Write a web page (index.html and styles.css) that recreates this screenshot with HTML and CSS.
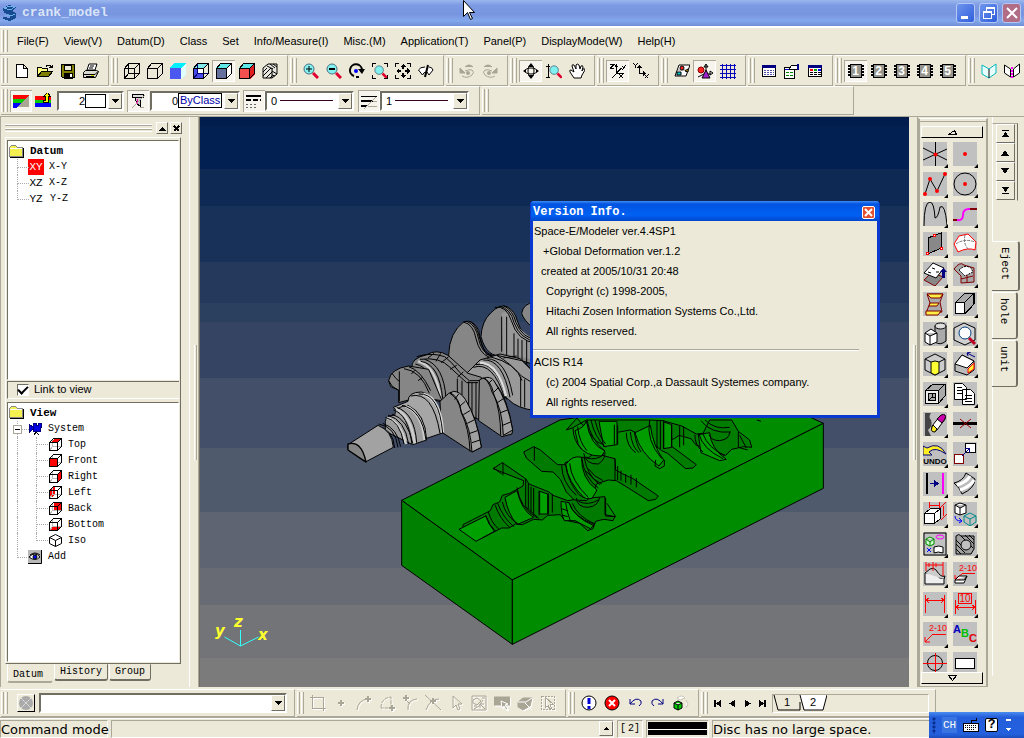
FILE: index.html
```html
<!DOCTYPE html>
<html lang="en">
<head>
<meta charset="utf-8">
<title>crank_model</title>
<link rel="stylesheet" href="styles.css">
</head>
<body>
<svg class="defs" aria-hidden="true">
  <symbol id="cube" viewBox="0 0 16 16"><path d="M.5 5.5h10v10h-10zM.5 5.5l4-5h11v10l-5 5M10.5 5.5l5-5"/></symbol>
  <symbol id="hidden" viewBox="0 0 16 16"><path d="M4.5 .5v10h11M.5 15.5l4-5"/></symbol>
  <symbol id="lens" viewBox="0 0 16 16"><path d="M10 10l5 5" stroke="#e00030" stroke-width="3"/><circle cx="6" cy="6" r="5" fill="#80f0f0" stroke="#507080"/></symbol>
  <symbol id="chip" viewBox="0 0 16 16"><path d="M0 2h16v2H0zM0 5h16v2H0zM0 8h16v2H0zM0 11h16v2H0z" fill="#000" stroke="none"/><path d="M2.500 1.500h11v13h-11z" fill="#96968e" stroke="#000"/></symbol>
  <symbol id="smallcube" viewBox="0 0 13 13"><path d="M3.500 .5v8h9M.5 12.500l3-4" stroke="#bbb"/><path d="M.5 4.500h8v8h-8zM.5 4.500l4-4h8v8l-4 4M8.500 4.500l4-4"/></symbol>
  <symbol id="down" viewBox="0 0 7 4"><path d="M0 0h7L3.500 4z" fill="#000" stroke="none"/></symbol>
  <symbol id="folder" viewBox="0 0 15 13"><path d="M.5 2.500l2-2h4l2 2h5v9H.5z" fill="#f4f050" stroke="#888"/><path d="M1 12.500h13.500V3" stroke="#000"/><path d="M1 3.500h12" stroke="#fff"/></symbol>
</svg>

<header class="titlebar">
  <svg class="i logo" viewBox="0 0 16 16"><path d="M1 3l6-3 8 2-5 4 4 2v5l-6 3-7-2v-2l7 1 1-3-7-2z" fill="#174b91" stroke="none"/><path d="M2 3l6-2 5 1-5 3zM3 10l6 1 4-2" stroke="#6fb0e8"/></svg>
  <h1>crank_model</h1>
  <div class="winbtns">
    <button aria-label="Minimize"><svg class="i" viewBox="0 0 16 16"><path d="M3 12h7" stroke="#fff" stroke-width="3"/></svg></button>
    <button aria-label="Restore"><svg class="i" viewBox="0 0 16 16"><path d="M5.500 5.500v-3h8v7h-3M5 3h9M2.500 6.500h8v7h-8zM2 7h9" stroke="#fff"/></svg></button>
    <button class="close" aria-label="Close"><svg class="i smooth" viewBox="0 0 16 16"><path d="M3 3l10 10M13 3L3 13" stroke="#fff" stroke-width="2"/></svg></button>
  </div>
</header>
<svg class="i smooth pointer" viewBox="0 0 12 21" aria-hidden="true"><path d="M.5 .5v16l4-4 3 7 2-1-3-6h5z" fill="#fff"/></svg>

<nav class="menubar" aria-label="Main menu">
  <span class="grip"></span>
  <button>File(F)</button><button>View(V)</button><button>Datum(D)</button><button>Class</button><button>Set</button><button>Info/Measure(I)</button><button>Misc.(M)</button><button>Application(T)</button><button>Panel(P)</button><button>DisplayMode(W)</button><button>Help(H)</button>
</nav>

<div class="toolbar">
  <div class="group"><span class="grip"></span>
    <button aria-label="New"><svg class="i" viewBox="0 0 16 16"><path d="M2.500 1.500h7l4 4v9h-11zM9.500 1.500v4h4" fill="#fff"/></svg></button>
    <button aria-label="Open"><svg class="i" viewBox="0 0 16 16"><path d="M.5 13.500v-9h4l1 1h5v3" fill="#ffff80"/><path d="M.5 13.500l4-5h11l-4 5z" fill="#808000"/><path d="M9 3.500l1-1h3l2 2M12 4.500h3v-3"/></svg></button>
    <button aria-label="Save"><svg class="i" viewBox="0 0 16 16"><path d="M1.500 1.500h13v13h-12l-1-1z" fill="#808000"/><path d="M4.500 2h7v5h-7z" fill="#ece9d8"/><path d="M4 10h8v5H4z" fill="#000"/><path d="M10 11h2v3h-2z" fill="#fff" stroke="none"/></svg></button>
    <button aria-label="Print"><svg class="i smooth" viewBox="0 0 16 16"><path d="M4 7l2-6h8l-2 6z" fill="#fff"/><path d="M7 3h4M6 5h4"/><path d="M.5 9.500l2-2h11l2 1-3 6H.5z" fill="#d8d8d0"/><path d="M1 11.500h11l3-3M3 13.500h8"/><path d="M8 12.500h3" stroke="#dd0"/></svg></button>
  </div>
  <div class="group"><span class="grip"></span>
    <button aria-label="Wireframe"><svg class="i"><use href="#hidden"/><use href="#cube"/></svg></button>
    <button aria-label="Hidden line"><svg class="i"><use href="#cube"/></svg></button>
    <button aria-label="Shaded"><svg class="i" viewBox="0 0 16 16"><path d="M0 5l4-5h12l-5 5z" fill="#00f0ff" stroke="none"/><path d="M0 5h11v11H0z" fill="#4a58f0" stroke="none"/><path d="M11 5l5-5v11l-5 5z" fill="#e0ffff" stroke="none"/></svg></button>
    <button aria-label="Shaded wire"><svg class="i" viewBox="0 0 16 16"><path d="M0 5h11v11H0z" fill="#4a4aec" stroke="none"/><path d="M0 5l4-5h12l-5 5z" fill="#80e8e8" stroke="none"/><path d="M5 6h6v5H5z" fill="#fff" stroke="none"/><use href="#hidden" stroke="#000070"/><use href="#cube"/></svg></button>
    <button class="on" aria-label="Shaded edges"><svg class="i" viewBox="0 0 16 16"><path d="M0 5h11v11H0z" fill="#66709c" stroke="none"/><path d="M0 5l4-5h12l-5 5z" fill="#60e8e8" stroke="none"/><path d="M11 5l5-5v11l-5 5z" fill="#fff" stroke="none"/><use href="#cube"/></svg></button>
    <button aria-label="Red shaded"><svg class="i" viewBox="0 0 16 16"><path d="M0 5h11v11H0z" fill="#f45050" stroke="none"/><path d="M0 5l4-5h12l-5 5z" fill="#60e8e8" stroke="none"/><path d="M11 5l5-5v11l-5 5z" fill="#e02020" stroke="none"/><use href="#cube"/></svg></button>
    <button aria-label="Hatch"><svg class="i smooth" viewBox="0 0 16 16"><path d="M1 5l5-4h9v10l-5 4H1z" fill="#e8e8e0"/><path d="M1 9l4-4M1 13l8-8M4 15l6-6M8 15l2-2M5 3l6 3M8 1l5 4M11 1l4 3M10 8l5 3M10 12l3 1M10 5v10" stroke-width="1"/></svg></button>
  </div>
  <div class="group"><span class="grip"></span>
    <button aria-label="Zoom in"><svg class="i smooth"><use href="#lens"/><path d="M3 6h6M6 3v6"/></svg></button>
    <button aria-label="Zoom out"><svg class="i smooth"><use href="#lens"/><path d="M3 6h6" stroke-width="2"/></svg></button>
    <button aria-label="Rotate"><svg class="i smooth" viewBox="0 0 16 16"><path d="M5 13a6 6 0 1 1 8-6" stroke-width="2"/><path d="M9 6h7l-3 5z" fill="#000" stroke="none"/><circle cx="7" cy="8" r="2" fill="#00f" stroke="none"/><path d="M7 14h3" stroke-width="2"/></svg></button>
    <button aria-label="Zoom window"><svg class="i" viewBox="0 0 16 16"><path d="M.5 4V.5H4M12 .5h3.500V4M.5 12v3.500H4M12 15.500h3.500V12"/><g class="smooth" transform="translate(2 2) scale(.85)"><use href="#lens" width="16" height="16"/></g></svg></button>
    <button aria-label="Fit"><svg class="i" viewBox="0 0 16 16"><path d="M.5 4V.5H4M12 .5h3.500V4M.5 12v3.500H4M12 15.500h3.500V12"/><path d="M8 1l3 3H5zM8 15l3-3H5zM1 8l3-3v6zM15 8l-3-3v6z" fill="#000" stroke="none"/><path d="M8 4v2M8 10v2M4 8h2M10 8h2" stroke-width="2"/></svg></button>
    <button aria-label="Flip view"><svg class="i smooth" viewBox="0 0 16 16"><path d="M7 4Q2 4 .5 7l4 5q1-3 4-3M11 4q3 0 4 3l-4 5-2-3" fill="#fff"/><path d="M10 2L7 14" stroke-width="2"/></svg></button>
  </div>
  <div class="group"><span class="grip"></span>
    <button aria-label="Previous view" disabled><svg class="i smooth" viewBox="0 0 16 16"><path d="M1 5v5h5zM6 4q4-4 8 0" fill="#aaa696" stroke="#aaa696"/><path d="M3 13q5 3 10-1 3-3 0-5-3-1-7 1" stroke="#aaa696"/><circle cx="9" cy="10" r="2" fill="#aaa696" stroke="none"/></svg></button>
    <button aria-label="Next view" disabled><svg class="i smooth" viewBox="0 0 16 16"><path d="M15 5v5h-5zM10 4Q6 0 2 4" fill="#aaa696" stroke="#aaa696"/><path d="M13 13q-5 3-10-1-3-3 0-5 3-1 7 1" stroke="#aaa696"/><circle cx="7" cy="10" r="2" fill="#aaa696" stroke="none"/></svg></button>
  </div>
  <div class="group"><span class="grip"></span>
    <button class="on" aria-label="Orbit"><svg class="i smooth" viewBox="0 0 16 16"><ellipse cx="8" cy="8" rx="6" ry="3"/><ellipse cx="8" cy="8" rx="3" ry="6"/><path d="M8 0l3 4H5zM8 16l3-4H5zM0 8l3-2v4zM16 8l-3-2v4z" fill="#000" stroke="none"/></svg></button>
    <button aria-label="Zoom drag"><svg class="i smooth" viewBox="0 0 16 16"><path d="M0 3.500h4M2.500 1v13M0 14.500h4"/><g transform="translate(3 2) scale(.85)"><use href="#lens" width="16" height="16"/></g></svg></button>
    <button aria-label="Pan"><svg class="i smooth" viewBox="0 0 16 16"><path d="M5 15L1 9q-1-2 1-2l3 2-2-6q0-2 2-1l2 4V2q1-2 3 0l1 4 1-3q2-1 2 1l-1 4 1-2q2-1 2 1l-3 5-1 3z" fill="#fff"/></svg></button>
  </div>
  <div class="group"><span class="grip"></span>
    <button class="on" aria-label="Axes 3D"><svg class="i" viewBox="0 0 16 16"><path d="M0 1.500h4l-4 4h4M6.500 3v7h7M6.500 10l5-5M5 4l1.500-2L8 4M12 3l2 2M16 2l-4 5M9 11l4 4M13 11l-4 4M2 15l4-4"/></svg></button>
    <button aria-label="Axes 2D"><svg class="i" viewBox="0 0 16 16"><path d="M.5 .5l2 2 2-2M2.500 2v3M6.500 3.500v7h6M4.500 5l2-2 2 2M10 8.500l2 2-2 2M11.500 11.500l4 4M15.500 11.500l-4 4"/></svg></button>
  </div>
  <div class="group"><span class="grip"></span>
    <button aria-label="Datum plane"><svg class="i smooth" viewBox="0 0 16 16"><path d="M5 2h11l-4 11H1z" fill="#fff"/><path d="M4 7h10" stroke="#888"/><circle cx="8" cy="5" r="2" fill="#f22"/><path d="M11 8l3-2v3z" fill="#fd0"/><path d="M3 9h4v3H3z" fill="#0cc"/></svg></button>
    <button class="on" aria-label="Show objects"><svg class="i smooth" viewBox="0 0 16 16"><path d="M9 2v9h5M9 1L7 4h4zM16 10l-3-2v4zM9 10l-8 4"/><circle cx="4" cy="7" r="3" fill="#f22" stroke="#800"/><path d="M9 7l4 8H5z" fill="#a020d0"/></svg></button>
    <button aria-label="Grid"><svg class="i" viewBox="0 0 16 16"><path d="M2.500 1v15M6.500 1v15M10.500 1v15M14.500 1v15M0 2.500h16M0 6.500h16M0 10.500h16M0 14.500h16" stroke="#0808b8"/></svg></button>
  </div>
  <div class="group"><span class="grip"></span>
    <button aria-label="List"><svg class="i" viewBox="0 0 16 16"><path d="M1.500 2.500h13v11h-13z" fill="#fff"/><path d="M1 3.500h14" stroke="#000080" stroke-width="3"/><path d="M3 7.500h10M3 9.500h10M3 11.500h10" stroke="#55a" stroke-dasharray="2 1"/></svg></button>
    <button aria-label="Properties"><svg class="i" viewBox="0 0 16 16"><path d="M.5 4.500h10v11H.5z" fill="#fff"/><path d="M1 6.500h9" stroke="#00c"/><path d="M2 9.500h7M2 12.500h7" stroke="#080" stroke-dasharray="3 1"/><path d="M5 6l3-4h6l1 3-4 2z" fill="#fff"/><path d="M14 1v6" stroke="#008" stroke-width="2"/></svg></button>
    <button aria-label="Table"><svg class="i" viewBox="0 0 16 16"><path d="M1.500 2.500h13v11h-13z" fill="#fff"/><path d="M1 3.500h14" stroke="#000080" stroke-width="3"/><path d="M3 7h3" stroke="red" stroke-width="2"/><path d="M7 7h3" stroke="#00b000" stroke-width="2"/><path d="M11 7h3" stroke="#00f" stroke-width="2"/><path d="M3 9.500h11M3 11.500h11" stroke-dasharray="3 1"/></svg></button>
  </div>
  <div class="group"><span class="grip"></span>
    <button class="on chip"><svg class="i"><use href="#chip"/></svg><b>1</b></button>
    <button class="chip"><svg class="i"><use href="#chip"/></svg><b>2</b></button>
    <button class="chip"><svg class="i"><use href="#chip"/></svg><b>3</b></button>
    <button class="chip"><svg class="i"><use href="#chip"/></svg><b>4</b></button>
    <button class="chip"><svg class="i"><use href="#chip"/></svg><b>5</b></button>
  </div>
  <div class="group last"><span class="grip"></span>
    <button aria-label="Book"><svg class="i smooth" viewBox="0 0 16 16"><path d="M1 2l7 4 7-5v9l-7 5-7-4z" fill="#e8ffff" stroke="#00b8c0"/><path d="M8 6v9"/></svg></button>
    <button aria-label="Section"><svg class="i smooth" viewBox="0 0 16 16"><path d="M.5 2l6 4v8l-6-4zM15.500 1l-6 5v8l6-4z" fill="#fff"/><path d="M8 4v12" stroke="#f0f" stroke-width="2" stroke-dasharray="2 1"/></svg></button>
  </div>
</div>

<div class="toolbar second">
  <div class="group"><span class="grip"></span>
    <button class="on" aria-label="Colour"><svg class="i" viewBox="0 0 16 16"><path d="M0 2h16l-4 4H0z" fill="red" stroke="none"/><path d="M0 6h12l-4 4H0z" fill="#0c0" stroke="none"/><path d="M0 10h8l-5 5H0z" fill="#00f" stroke="none"/><path d="M16 2v12H4z" fill="#aaa696" stroke="none"/></svg></button>
    <button aria-label="Raise class"><svg class="i" viewBox="0 0 16 16"><path d="M0 3h16v4H0z" fill="red" stroke="none"/><path d="M0 7h16v3H0z" fill="#0c0" stroke="none"/><path d="M0 10h16v4H0z" fill="#00f" stroke="none"/><path d="M13.500 9.500h-5v-2h2v-4h-2l4-4 3 4h-2z" fill="#ff0"/></svg></button>
    <div class="combo c1"><select aria-label="Colour number"><option>2</option></select><span class="swatch"></span><span class="arrow"><svg class="i"><use href="#down"/></svg></span></div>
    <button class="on" aria-label="Filter"><svg class="i" viewBox="0 0 16 16"><path d="M2.500 1.500h11v3h-11z" fill="#ddd"/><path d="M5.500 4.500h6l-1 3v6l-4-3z" fill="#ccc"/><path d="M6 9h2M7 6v5" stroke="#f0a"/><path d="M2 15L15 2M10 14h4" stroke="#aaa696"/></svg></button>
    <div class="combo c2"><select aria-label="Class number"><option>0</option></select><span class="byclass">ByClass</span><span class="arrow"><svg class="i"><use href="#down"/></svg></span></div>
    <button class="on" aria-label="Line type"><svg class="i" viewBox="0 0 16 16"><path d="M0 3h15" stroke-width="2"/><path d="M0 7h15" stroke-width="2" stroke-dasharray="5 2"/><path d="M0 11h10M0 14h10" stroke="#666" stroke-dasharray="2 2"/></svg></button>
    <div class="combo line c3"><select aria-label="Line type number"><option>0</option></select><span class="arrow"><svg class="i"><use href="#down"/></svg></span></div>
    <button class="on" aria-label="Line width"><svg class="i" viewBox="0 0 16 16"><path d="M0 3.500h16"/><path d="M0 8h12" stroke-width="2"/><path d="M0 13h6" stroke-width="2"/><path d="M12 8h4M7 13h9M3 16L15 4" stroke="#aaa696"/></svg></button>
    <div class="combo line c3"><select aria-label="Line width number"><option>1</option></select><span class="arrow"><svg class="i"><use href="#down"/></svg></span></div>
  </div>
  <div class="group spare"><span class="grip"></span></div>
</div>

<main class="work">
  <aside class="left">
    <div class="dockhead"><span class="rail"></span><button aria-label="Collapse"><svg class="i" viewBox="0 0 9 9"><path d="M1 7h7L4.500 3z" fill="#000" stroke="none"/></svg></button><button aria-label="Close panel"><svg class="i" viewBox="0 0 9 9"><path d="M2 2l5 5M7 2L2 7" stroke-width="2"/></svg></button></div>
    <div class="sheet">
      <ul class="tree datum">
        <li class="root"><svg class="i fold"><use href="#folder"/></svg>Datum</li>
        <li class="leaf"><span class="code sel">XY</span>X-Y</li>
        <li class="leaf"><span class="code">XZ</span>X-Z</li>
        <li class="leaf end"><span class="code">YZ</span>Y-Z</li>
      </ul>
      <label class="link"><input type="checkbox" checked>Link to view</label>
      <ul class="tree view">
        <li class="root"><svg class="i fold"><use href="#folder"/></svg>View</li>
        <li class="leaf sys"><span class="minus"></span><svg class="i ico" viewBox="0 0 14 14"><path d="M5 1h3v2h2V1h3v4h-1v4H5V7l-4 4V2l4 3z" fill="#0000e0" stroke="#000080"/><path d="M6 13l2-3 3 3"/></svg>System</li>
        <li class="leaf deep"><svg class="i c13" viewBox="0 0 13 13"><use href="#smallcube"/><path d="M2 4.500l3-3.500h7L9 4.500z" fill="red" stroke="none"/><path d="M.5 4.500h8l4-4"/></svg>Top</li>
        <li class="leaf deep"><svg class="i c13" viewBox="0 0 13 13"><use href="#smallcube"/><path d="M.5 4.500h8v8h-8z" fill="red"/></svg>Front</li>
        <li class="leaf deep"><svg class="i c13" viewBox="0 0 13 13"><use href="#smallcube"/><path d="M8.500 4.500l4-4v8l-4 4z" fill="red"/></svg>Right</li>
        <li class="leaf deep"><svg class="i c13" viewBox="0 0 13 13"><path d="M1 4l4-3v8l-4 3z" fill="red" stroke="red"/><use href="#smallcube"/></svg>Left</li>
        <li class="leaf deep"><svg class="i c13" viewBox="0 0 13 13"><path d="M5 1h7v7H5z" fill="red" stroke="none"/><use href="#smallcube"/></svg>Back</li>
        <li class="leaf deep"><svg class="i c13" viewBox="0 0 13 13"><path d="M1 12l3-3h8l-3 3z" fill="red" stroke="red"/><use href="#smallcube"/></svg>Bottom</li>
        <li class="leaf deep lastdeep"><svg class="i smooth c13" viewBox="0 0 13 13"><path d="M6.500 .5l6 3v6l-6 3-6-3v-6zM.5 3.500l6 3 6-3M6.500 6.500v6"/></svg>Iso</li>
        <li class="leaf end"><svg class="i smooth ico" viewBox="0 0 14 14"><path d="M0 0h14v14H0z" fill="#b8b8b8" stroke="none"/><path d="M0 13.500h13.500V0"/><path d="M1 7q6-6 11 0-5 5-11 0z" fill="#fff"/><path d="M2 5q5-4 10 0"/><circle cx="7" cy="7" r="2" fill="#00f"/></svg>Add</li>
      </ul>
    </div>
    <div class="tabs" role="tablist"><button class="cur" role="tab">Datum</button><button role="tab">History</button><button role="tab">Group</button></div>
  </aside>
  <div class="split"></div>

  <section class="viewport">
    <svg class="scene" viewBox="199 117 711 570" preserveAspectRatio="xMidYMid slice" role="img" aria-label="Crank model">
      <g shape-rendering="crispEdges">
        <rect x="199" y="117" width="711" height="10" fill="#001d4e"/><rect x="199" y="126" width="711" height="43" fill="#022152"/>
        <rect x="199" y="169" width="711" height="37" fill="#0e2953"/><rect x="199" y="206" width="711" height="56" fill="#183158"/>
        <rect x="199" y="262" width="711" height="41" fill="#24395c"/><rect x="199" y="303" width="711" height="19" fill="#2b3f5e"/>
        <rect x="199" y="322" width="711" height="56" fill="#354463"/><rect x="199" y="378" width="711" height="70" fill="#434f68"/>
        <rect x="199" y="448" width="711" height="64" fill="#505a6d"/><rect x="199" y="512" width="711" height="56" fill="#5e6472"/>
        <rect x="199" y="568" width="711" height="37" fill="#686b74"/><rect x="199" y="605" width="711" height="53" fill="#727478"/>
        <rect x="199" y="658" width="711" height="29" fill="#7b7b7b"/>
      </g>
      <g transform="translate(395 410) scale(.33333)" fill="none" stroke="#000" stroke-width="3" stroke-linejoin="round">
        <path d="M20 271L495 30 700 0h500l85 40L352 510z" fill="#008c00"/>
        <path d="M20 271l332 239v193L20 466z" fill="#008000"/>
        <path d="M352 510L1285 40v195L352 703z" fill="#008c00"/>

        <path d="M294 176l28-18 70 48 10 16 60 24 12 10 44 16 40-6 72-6v54l30 6-6 12-28-4-24 6-8 22-16 6-24-22-46-10-12-16-38 2-16 14-26-2-34 16-20-2-20 12-22 0-62 32-8 0-46-36 0-6 82-42 8-18 20-8 8-20 22-6 40-22 2-16z" fill="#007a00"/>
        <path d="M192 358l80-40q8 24 26 46l-55 30z" fill="#00a000"/>
        <path d="M330 262l36-20q14 60 50 80l-50 22q-28-34-36-82z" fill="#009800"/>
        <path d="M280 306q10 34 32 52M272 316q10 30 30 48M300 284q14 42 44 68M308 280q16 42 48 70M322 276q10 44 48 66M366 232q8 60 60 92"/>
        <path d="M392 206v84l40 36M400 220v76M408 230v78M416 234v80M432 242v74M460 250v64M472 252v56"/>
        <path d="M434 244l24 8v60h-24z" fill="#00a000"/>
        <path d="M324 158v38M296 174l24 18"/>
        <path d="M498 274l24 4q10 40 76 66l-12 12-46-24-32 0q-10-20-10-58z" fill="#009c00"/>
        <path d="M512 278q4 30 14 54M522 278q16 44 72 68M500 296l18 6M504 316l14 4M532 280q16 40 68 62"/>

        <path d="M386 126l30-16 20 10 52 44 22 0 0-6 48-16 24 0 24-18 22 14 32 8 2 34 22 12 30 14 76 52-8 10-22 4-60-38-36-22-24-2-36 12-10 34-20 16-36-2-24-24-18-38-22-22-34-2-46-40z" fill="#007a00"/>
        <path d="M512 164q20-30 48-22-2 64 46 98l-14 24q-16 8-40-10-34-40-40-90z" fill="#009c00"/>
        <path d="M500 166q0 50 44 90M512 162q6 54 56 102M524 160q4 52 56 102M560 144q8 60 50 90M568 144q8 50 46 80M544 264q2 28 36 28 30-4 34-30M550 274q30 14 60-4M418 110v42"/>
        <path d="M660 146v64M668 168v42M678 182v30M692 192v26M708 194v30M724 204v28M574 184q20 26 46 38M580 176q16 24 44 36"/>

        <path d="M514 60l18-6 42-24h190l40 2 56 16 44 24 20-2 20-40h66l20 34 34 26 6 22-24-2-36 8-18 18-66-24-22-6-16-20-36-10-14 10-28 8 94 70-10 10-22 2-54-46-18-8-48-40-46-22-44 8-6 30q-24 14-52-4l-28-34-30-36z" fill="#007c00"/>
        <path d="M540 62q30-10 34-30 12 76 56 90l-10 16q-50 2-70-34zM612 34h54v70l-40 6zM720 68l46-22q8 62 40 104l-14 18q-56-36-72-100zM910 74l34-6q4 48 50 80l-20 4-56-24zM806 36l24 8v68l-24 4z" fill="#009c00"/>
        <path d="M576 30q10 58 54 94M588 30q10 50 44 82M600 30q12 50 32 72M566 130q6 34 44 32 22-14 20-36M574 144q30 8 52-10M534 54q0 36 26 64M548 50q4 46 28 72"/>
        <path d="M694 68q0 40 28 60M706 66q4 44 26 62M718 66q6 40 20 60M764 30q-12 60 36 116M786 30v84M796 30v88M806 30v86M830 44v68M854 48v64M866 50v56M782 150l-2 18 14 8 14-8v-18M668 46v58M658 44v60M900 74q-2 30 24 52M912 72q10 44 72 74M924 72q14 40 66 66"/>
        <path d="M918 32q30 40 90 34M930 30q30 30 74 22M942 74q6 18 32 18 30-4 30-26M1030 66v46l28 8M1034 76l20 38M632 264v54l30 2-26-40M1086 30l12 4"/>
      </g>
      <g transform="translate(340 290) scale(.33333)" fill="#868686" stroke="#000" stroke-width="3" stroke-linejoin="round">
        <path d="M585 36q-35 4-40 34 5 20 40 50z"/>
        <path d="M423 140q2-46 30-72 26-26 48-18 24 14 30 40 16 54 60 66v70l-100-30q-50 10-68-56z"/>
        <path d="M485 70q15-10 30 4 10 40 70 76v60l-95-20z" fill="#989898" stroke="none"/>
        <path d="M485 80v105M500 80v115M522 130v70M534 146v66M546 150v76M560 150v80"/>
        <path d="M464 52q36-6 50 40 18 62 76 68M478 48q34 8 44 50 18 50 70 58M490 46q30 16 38 52 20 48 62 50" fill="none"/>
        <path d="M326 195q2-68 46-100 28-8 44 26 8 50 24 72l40 10-70 60-70-22z"/>
        <path d="M370 96q30 6 38 50 10 44 40 56M380 94q28 10 36 54 8 38 36 50M390 94q22 14 30 54 8 38 36 48" fill="none"/>
        <path d="M380 250l40-40 60-18 60 14 50 46v110q-60-6-85-34z" fill="#999"/>
        <path d="M400 232q60-20 95 96M408 224q60-14 92 104M430 210q58-4 80 112M440 206q58 0 78 110M450 200q80 20 96 72" fill="none"/>
        <path d="M420 218q54 2 78 100" fill="none" stroke="#ddd" stroke-width="7"/>
        <path d="M470 196l76 16 44 44v30l-46-28q-32-38-74-62z" fill="#999"/><path d="M542 260v90M554 268v84M490 204l40-6"/>
        <path d="M216 232q-4-26 44-38 30-18 64 2l60 54 40 12v130l-100-48-50-18z" fill="#868686"/>
        <path d="M230 200q44-14 84 0 20 14 44 46l30 26 34 0M240 208q60-8 90 24l50 46h34M282 190l-18 14M302 190l-14 24M326 200l-22 18M350 226l-20 12M370 246l-18 16" fill="none"/>
        <path d="M234 214q54 12 68 114" fill="none" stroke="#d0d0d0" stroke-width="7"/>
        <path d="M242 214q56 8 66 112M254 208q58 18 64 118M226 222q54 12 68 106" fill="none"/>
        <path d="M352 266v50M366 272v44M386 274v82M396 276v98M408 276v112"/>
        <path d="M418 270q22-16 44 4 42 50 56 146l-2 12-30 8-70-48z"/>
        <path d="M440 262q18 0 24 14 40 60 54 144l-28 16q-2-80-34-130-8-30-22-40z" fill="#a0a0a0"/>
        <path d="M428 264q24 4 34 50 20 50 20 122M456 270l-12 12M476 292l-14 14M490 326l-18 12M502 360l-20 8M512 396l-24 10" fill="none"/>
        <path d="M146 272q6-36 60-44l60 10 40 94-70-10-60 16v-38l-24-10z"/>
        <path d="M178 244v90M206 230q36 10 66 72M192 236q50 6 76 74M146 272q8 20 28 28M156 250q14 20 22 24M226 240l-12 12M248 262l-14 10" fill="none"/>
        <path d="M300 334l26-24q26-14 46 14 40 56 52 148l-28 14-92-60z"/>
        <path d="M340 304q20 0 36 24 36 60 48 144l-28 14q-4-74-32-120-8-40-34-56z" fill="#a0a0a0"/>
        <path d="M330 308q28 12 34 60 24 50 26 116M356 312l-12 16M376 334l-16 14M390 362l-20 12M402 390l-20 10M412 422l-22 8M420 450l-24 8" fill="none"/>
        <path d="M204 334q0-28 40-28 52 8 66 122l-70 24q-40-60-80-100z" fill="#a6a6a6"/>
        <path d="M250 312q52 14 58 116" fill="none" stroke="#d8d8d8" stroke-width="9"/>
        <path d="M212 318q66-16 88 112M236 312q62-4 72 118" fill="none"/>
        <path d="M136 394q4-20 28-18 0-26 40-30 52 24 56 104l-42 14-82-40z" fill="#9d9d9d"/>
        <path d="M168 358q46 20 56 102M196 348q50 20 58 102M140 384q40 8 58 78" fill="none" stroke="#ccc" stroke-width="8"/>
        <path d="M160 360q44 12 56 102M170 352q54 18 60 106M186 346q60 14 72 104M136 382q44 10 56 80M144 376q50 12 62 86M156 372q48 16 62 88M110 408q50 8 54 66M116 402q50 8 58 70M128 400q44 14 54 70" fill="none"/>
        <path d="M24 464l90-58q42 16 46 66l-84 44q-30-20-52-36z" fill="#a2a2a2"/>
        <path d="M24 480v-18q40-12 54 54z" fill="#858585" stroke-width="4"/>
      </g>
      <path d="M240.500 630v16l-16-9M240.500 646l18-9" fill="none" stroke="#3ff"/>
      <g class="axis"><text x="215" y="636">y</text><text x="234" y="627">z</text><text x="258" y="640">x</text></g>
    </svg>

    <div class="dialog" role="dialog" aria-labelledby="dlg">
      <div class="dhead"><h2 id="dlg">Version Info.</h2><button aria-label="Close dialog"><svg class="i smooth" viewBox="0 0 11 11"><path d="M2 2l7 7M9 2L2 9" stroke="#fff" stroke-width="2"/></svg></button></div>
      <div class="dbody">
        <p>Space-E/Modeler ver.4.4SP1</p><p class="in2">+Global Deformation ver.1.2</p><p class="in1">created at 2005/10/31 20:48</p><p class="in3">Copyright (c) 1998-2005,</p><p class="in3">Hitachi Zosen Information Systems Co.,Ltd.</p><p class="in3">All rights reserved.</p>
        <hr>
        <p>ACIS R14</p><p class="in3">(c) 2004 Spatial Corp.,a Dassault Systemes company.</p><p class="in3">All rights reserved.</p>
      </div>
    </div>
  </section>
  <div class="split right"></div>

  <aside class="palette">
    <button class="scroll" aria-label="Scroll up"><svg class="i" viewBox="0 0 9 6"><path d="M.5 5.500h8l-2-4z"/></svg></button>
    <div class="cells">
      <button aria-label="Point on axes"><svg class="i smooth"><path d="M12.500 0v24M0 6l24 12M0 18L24 7"/><circle cx="12.500" cy="12.500" r="2" fill="red" stroke="none"/></svg></button>
      <button aria-label="Point"><svg class="i smooth"><circle cx="12" cy="12" r="2" fill="red" stroke="none"/></svg></button>
      <button aria-label="Polyline"><svg class="i smooth"><path d="M2 22L7 7l7 12 8-17"/><g fill="red" stroke="none"><circle cx="2" cy="22" r="2"/><circle cx="7" cy="7" r="2"/><circle cx="14" cy="19" r="2"/><circle cx="22" cy="2" r="2"/></g></svg></button>
      <button aria-label="Circle"><svg class="i smooth"><circle cx="12" cy="12" r="11"/><circle cx="12" cy="12" r="2" fill="red" stroke="none"/></svg></button>
      <button aria-label="Spline"><svg class="i smooth"><path d="M1 24Q1 0 7 0q4 0 5 16 3 0 5-11 5-4 7 18"/></svg></button>
      <button aria-label="Connect curve"><svg class="i smooth"><path d="M0 18h5M16 7h8" stroke="#800000" stroke-width="2"/><path d="M4 18q6 1 6-5t6-6h1" stroke="#f0f" stroke-width="2"/></svg></button>
      <button aria-label="Plane"><svg class="i"><path d="M5 6l13-5v15L5 22z" fill="#888"/><path d="M10.500 2.500h2v2h-2zM17.500 15.500h2v2h-2zM3.500 20.500h2v2h-2z" fill="#fff" stroke="red"/></svg></button>
      <button aria-label="Surface"><svg class="i smooth"><path d="M6 4l9-2 8 8-1 8q-7-3-17 2L1 12z" fill="#fff" stroke="red"/><path d="M3 12q8-6 19-2M12 3q-2 8 3 14" stroke="#777" stroke-dasharray="3 1"/></svg></button>
      <button aria-label="Offset surface"><svg class="i smooth"><path d="M1 18l8-8 11 5-8 9z" fill="#888" stroke="#800000"/><path d="M1 11L10 1l11 5-8 10z" fill="#fff"/><path d="M5 10l3 1M9 6l3 1M13 10h3"/><path d="M20.500 16V9" stroke="#000080" stroke-width="3"/><path d="M17 10h7l-3.500-4z" fill="#000080" stroke="none"/></svg></button>
      <button aria-label="Patch surface"><svg class="i smooth"><path d="M1 7Q7-1 11 3l10 3v14L8 21V14z" fill="#a8a8a8" stroke="#800000"/><path d="M6 8q6-6 12-2l2 4-8 4z" fill="#fff" stroke-dasharray="2 1"/><path d="M8 17l12-3M14 13v8" stroke="#800000"/></svg></button>
      <button aria-label="Loft"><svg class="i smooth"><path d="M4 2h16l-3 8 2 10-12 1H3l4-10z" fill="#aaa" stroke="#800000"/><path d="M4 2h16l-3 4H8zM7 11h9l-2 3H6zM3 19h15l-3 4H3z" fill="#fe4" stroke="#800000"/></svg></button>
      <button aria-label="Block"><svg class="i"><path d="M2 11L12 1h9v11l-9 10z" fill="#aaa"/><path d="M2.500 10.500h9v11h-9z" fill="#fff"/><path d="M11.500 10.500l9-9v11l-9 9M2.500 10.500l9-9h9"/></svg></button>
      <button aria-label="Cylinder and box"><svg class="i smooth"><path d="M12 4v16q5 4 11-1V4" fill="#aaa"/><ellipse cx="17.500" cy="4" rx="5.500" ry="3" fill="#ddd"/><path d="M2 11l6-4 6 4v9l-7 3-5-3zM2 11l5 3 7-3M7 14v9" fill="#fff"/></svg></button>
      <button aria-label="Inspect solid"><svg class="i smooth"><path d="M1 6l10-5 11 5v12l-10 5-11-5z" fill="#d0d0d0"/><circle cx="12" cy="11" r="6" fill="#fff" stroke="#004080"/><path d="M16 16l6 6" stroke="#c00020" stroke-width="3"/></svg></button>
      <button aria-label="Shell"><svg class="i smooth"><path d="M2 7l10-5 10 5v11l-10 5-10-5z" fill="#ccc"/><path d="M8 10q4-2 8 0v11l-4 2-4-2z" fill="#ff3"/><path d="M2 7l6 3M22 7l-6 3"/></svg></button>
      <button aria-label="Draft"><svg class="i smooth"><path d="M2 12L9 3l12 6v9l-7 5-12-4z" fill="#bbb"/><path d="M2 12L9 3l12 6-7 7z" fill="#fff"/><path d="M15 17l6-6v6l-6 4z" fill="#fe3" stroke="red"/><path d="M14 1l8 4M15 4l-1-3 4-1" stroke="#000080"/></svg></button>
      <button aria-label="Hollow"><svg class="i"><path d="M2 9l8-7h12v12l-6 7" fill="#aaa"/><path d="M2.500 8.500h13v13h-13z" fill="#eee"/><path d="M5.500 11.500h7v7h-7z" fill="#aaa"/><path d="M15.500 8.500l6-6M6 18l3-3h3M9 12v3"/></svg></button>
      <button aria-label="Copy"><svg class="i smooth"><path d="M1.500 1.500h8l4 4v12h-12zM9.500 7.500h8l4 4v11h-12z" fill="#fff"/><path d="M4 5.500h5M4 8.500h5M4 11.500h5M12 13.500h7M12 16.500h7M12 19.500h7"/></svg></button>
      <button aria-label="Erase"><svg class="i smooth"><path d="M2 1h6q-3 4 0 7 2 6-3 10l3 6H2z" fill="#444" stroke="none"/><path d="M9 14l8-10q5-1 5 3l-8 11q-5 2-5-4z" fill="#fff"/><path d="M14 7l4-4q6-2 4 4l-3 4z" fill="#c0a"/><path d="M10 13l4 4-2 3q-5 0-3-5z" fill="#fe2"/></svg></button>
      <button aria-label="Break"><svg class="i smooth"><path d="M0 11.500h24" stroke-width="3"/><path d="M7 7l11 9M18 7L7 16" stroke="#a00000"/></svg></button>
      <button class="undo"><svg class="i smooth"><path d="M0 4v9h9l-3-3q6-6 17 2Q16-1 4 6z" fill="#fe2" stroke="#000080"/></svg><span>UNDO</span></button>
      <button aria-label="Move"><svg class="i"><path d="M12.500 1.500h10v9h-10z" fill="#fff"/><path d="M1.500 12.500h9v9h-9z" fill="#fff" stroke="#800000"/><path d="M9 14l7-7M12 6.500h4v4" stroke="#000080"/></svg></button>
      <button aria-label="Translate"><svg class="i"><path d="M4 1v21" stroke-width="2"/><path d="M20 1v21" stroke="#f0f" stroke-width="2"/><path d="M7 11.500h8" stroke="#000080"/><path d="M11 8l5 3.500-5 3.500z" fill="#000080" stroke="none"/></svg></button>
      <button aria-label="Bend"><svg class="i smooth"><path d="M1 11Q10 9 13 1l9 6q0 9-13 15-2-6-8-11z" fill="#bbb"/><path d="M4 13Q14 10 17 4M7 18q11-4 14-10" stroke="#fff" stroke-width="3"/></svg></button>
      <button aria-label="Dimension solid"><svg class="i"><path d="M1.500 11.500h10v10h-10zM1.500 11.500l6-5h10v10l-6 5M11.500 11.500l6-5" fill="#fff"/><path d="M6.500 0v6M16.500 0v6M6 3.500h10M17 6l6-6M20.500 4v10M18 18l6-6" stroke="red"/></svg></button>
      <button aria-label="Convert"><svg class="i smooth"><path d="M2 3l5-2 6 2v8l-6 2-5-2zM2 3l5 3 6-3M7 6v7" fill="#fff"/><path d="M11 14l6-3 6 3v6l-6 4-6-4zM11 14l6 3 6-3M17 17v6" stroke="#088"/><path d="M2 14q0 5 6 5M6 16l3 3-3 2" stroke="#00f"/></svg></button>
      <button aria-label="Part library"><svg class="i smooth"><path d="M1 1h22v22H1z"/><path d="M3 7l4-2 4 2v5l-4 2-4-2zM3 7l4 3 4-3M7 10v4" fill="#cfc" stroke="#080"/><ellipse cx="17" cy="5" rx="4" ry="2" stroke="#f0f"/><path d="M4 16l4 4M8 16l-4 4" stroke="#00f"/><path d="M11 15q5-2 9 0v6q-5-2-9 0z" fill="#fff"/></svg></button>
      <button aria-label="Hatch region"><svg class="i smooth"><path d="M3 4q3-3 5 0h13v13l-3 5H3z" fill="#a0a0a0"/><path d="M12 3l9 9M16 3l5 5M3 8l10 10M3 12l9 9M3 17l5 5M8 4l12 12"/><circle cx="13" cy="13" r="5" fill="#c0c0c0"/></svg></button>
      <button aria-label="Curve measure"><svg class="i smooth"><path d="M2 11h6q2-4 5 0 3 7 8 5v6H2z" fill="#eee"/><path d="M2 11l5-4q4-2 6 1 5 8 9 6l-1 3" fill="#ccc"/><path d="M3 0v9M10 0v9M20 0v14M3 3h17M6 1v4M13 1v4" stroke="red"/></svg></button>
      <button class="txt t210" aria-label="Note 2-10"><svg class="i smooth"><path d="M9 11.500h13M9 12l-7 5M2 13v4h5" stroke="red"/><path d="M2 18l4-4h8l-3 7H2zM2 18h9l3-4" fill="#fff"/></svg><span>2-10</span></button>
      <button aria-label="Distance"><svg class="i"><path d="M2.500 3v18M21.500 3v18M3 8.500h18M6 6l-3 2 3 3M18 6l3 2-3 3" stroke="red"/></svg></button>
      <button class="txt t10" aria-label="Dimension 10"><svg class="i"><path d="M5.500 1.500h13v10h-13zM2.500 8v14M22.500 8v14M3 15.500h19M6 13l-3 2 3 3M19 13l3 2-3 3" stroke="red"/></svg><span>10</span></button>
      <button class="txt t210" aria-label="Leader 2-10"><svg class="i smooth"><path d="M9 12.500h14M9 13l-7 7M2 15v5h5" stroke="red"/></svg><span>2-10</span></button>
      <button class="abc"><span>A</span><span>B</span><span>C</span></button>
      <button aria-label="Centre mark"><svg class="i smooth"><circle cx="12" cy="11" r="7.500"/><path d="M0 11.500h24M12.500 1v20" stroke="red"/></svg></button>
      <button aria-label="Rectangle"><svg class="i"><path d="M2.500 6.500h19v10h-19z" fill="#fff"/></svg></button>
    </div>
    <button class="scroll" aria-label="Scroll down"><svg class="i" viewBox="0 0 9 6"><path d="M.5 .5h8l-4 5z"/></svg></button>
  </aside>

  <aside class="side">
    <div class="navs">
      <button aria-label="First"><svg class="i" viewBox="0 0 9 9"><path d="M1 1h7v1H1zM1 8h7L4.500 3z" fill="#000" stroke="none"/></svg></button>
      <button aria-label="Up"><svg class="i" viewBox="0 0 9 9"><path d="M0 8h8L4 2z" fill="#000" stroke="none"/></svg></button>
      <button aria-label="Down"><svg class="i" viewBox="0 0 9 9"><path d="M0 1h8L4 7z" fill="#000" stroke="none"/></svg></button>
      <button aria-label="Last"><svg class="i" viewBox="0 0 9 9"><path d="M1 1h7L4.500 6zM1 7h7v1H1z" fill="#000" stroke="none"/></svg></button>
    </div>
    <div class="vtabs" role="tablist"><button class="cur" role="tab">Eject</button><button role="tab">hole</button><button role="tab">unit</button></div>
  </aside>
</main>

<div class="toolbar bottom">
  <div class="group command"><span class="grip"></span>
    <button class="stop" aria-label="Cancel command" disabled><svg class="i smooth" viewBox="0 0 16 16"><circle cx="8" cy="8" r="7" fill="#aaa" stroke="none"/><path d="M3 3l10 10M13 3L3 13" stroke="#eee" stroke-dasharray="2 1"/></svg></button>
    <div class="combo wide"><select aria-label="Command"><option></option></select><span class="arrow"><svg class="i"><use href="#down"/></svg></span></div>
  </div>
  <div class="group dim"><span class="grip"></span>
    <button disabled aria-label="Box snap"><svg class="i"><path d="M2.500 2.500h11v11h-11zM0 2.500h3M2.500 0v3M12 13.500h4M13.500 11v5"/></svg></button>
    <button disabled aria-label="Point snap"><svg class="i"><path d="M5 8h6M8 5v6" stroke-width="2"/></svg></button>
    <button disabled aria-label="End snap"><svg class="i smooth"><path d="M1 15Q2 5 12 4"/><path d="M9 4h6M12 1v6" stroke-width="2"/></svg></button>
    <button disabled aria-label="Arc snap"><svg class="i smooth"><path d="M2 13Q2 3 12 2v11z" stroke-dasharray="4 1"/><path d="M10 13h6M13 10v6" stroke-width="2"/></svg></button>
    <button disabled aria-label="Tangent snap"><svg class="i smooth"><path d="M6 15Q5 5 15 4M4 5l4 4"/><path d="M1 3h6M4 0v6" stroke-width="2"/></svg></button>
    <button disabled aria-label="Intersection snap"><svg class="i smooth"><path d="M0 0l16 15M1 15Q5 4 14 4"/><path d="M5 6h6M8 3v6" stroke-width="2"/></svg></button>
    <button disabled aria-label="Pick"><svg class="i smooth"><path d="M5 1v12l3-3 2 5 2-1-2-5h4z"/></svg></button>
    <button disabled aria-label="Pick region"><svg class="i smooth"><path d="M1 1h14v14H1zM2 5l4-2 4 3-4 4-4-2zM3 14l5-3 4-6M9 9l5 5M9 13V9h4M11 3h3M3 11h3"/></svg></button>
    <button disabled aria-label="Pick face"><svg class="i smooth"><path d="M0 2h16v8H0z" fill="#aaa696"/><path d="M7 6l7 3-3 1 3 4-2 1-2-4-2 2z" fill="#aaa696" stroke="#fff"/></svg></button>
    <button disabled aria-label="Pick body"><svg class="i smooth"><path d="M1 7l5-4h9l-2 8-7 4-5-3z" fill="#aaa696"/><path d="M1 7h8l6-4M8 8l6 6" stroke="#fff"/></svg></button>
    <button disabled aria-label="Pick window"><svg class="i"><path d="M1.500 1.500h13v13h-13z" stroke-dasharray="2 1"/><path d="M5.500 2.500v10l3-2 1 4 2-1-1-4h3z"/></svg></button>
  </div>
  <div class="group"><span class="grip"></span>
    <button aria-label="Information"><svg class="i smooth" viewBox="0 0 16 16"><circle cx="8" cy="8" r="7" fill="#fff"/><path d="M8 3v6M8 11v3" stroke="#00d" stroke-width="3"/></svg></button>
    <button aria-label="Stop"><svg class="i smooth" viewBox="0 0 16 16"><circle cx="8" cy="8" r="7" fill="red"/><path d="M5 5l6 6M11 5l-6 6" stroke="#fff" stroke-width="2"/></svg></button>
    <button aria-label="Undo"><svg class="i smooth" viewBox="0 0 16 16"><path d="M3 4v5h5M3 9q6-8 11-3 1 3-2 5" stroke="#000080"/></svg></button>
    <button aria-label="Redo"><svg class="i smooth" viewBox="0 0 16 16"><path d="M13 4v5H8M13 9Q7 1 2 6q-1 3 2 5" stroke="#000080"/></svg></button>
    <button aria-label="View solid"><svg class="i smooth" viewBox="0 0 16 16"><path d="M4 3q5-4 8 0l-5 2zM13 5l2 4-2 4" stroke="#c8c4b4" fill="#fff"/><path d="M1 8l4-2 4 2v5l-4 2-4-2zM1 8l4 2 4-2M5 10v5" fill="#0c0"/></svg></button>
  </div>
  <div class="group pages"><span class="grip"></span>
    <button aria-label="First page"><svg class="i" viewBox="0 0 9 9"><path d="M1 1h2v7H1zM8 1v7L3 4.500z" fill="#000" stroke="none"/></svg></button>
    <button aria-label="Previous page"><svg class="i" viewBox="0 0 9 9"><path d="M7 1v7L1 4.500z" fill="#000" stroke="none"/></svg></button>
    <button aria-label="Next page"><svg class="i" viewBox="0 0 9 9"><path d="M2 1v7l6-3.500z" fill="#000" stroke="none"/></svg></button>
    <button aria-label="Last page"><svg class="i" viewBox="0 0 9 9"><path d="M6 1h2v7H6zM1 1v7l5-3.500z" fill="#000" stroke="none"/></svg></button>
    <div class="sheets"><button><svg class="i smooth" viewBox="0 0 28 16"><path d="M1 0l4 15h22V7"/></svg><span>1</span></button><button><svg class="i smooth" viewBox="0 0 28 16"><path d="M1 0l4 15h19l4-15z" fill="#fff" stroke="none"/><path d="M1 0l4 15h19l4-15"/></svg><span>2</span></button></div>
  </div>
</div>

<footer class="status">
  <output class="mode">Command mode</output>
  <div class="prompt"><button aria-label="History"><svg class="i" viewBox="0 0 9 9"><path d="M1 6h7L4.500 3z" fill="#000" stroke="none"/></svg></button></div>
  <output class="count"><span>[</span><span>2]</span></output>
  <div class="meter"></div>
  <output class="disc">Disc has no large space.</output>
</footer>

<div class="ime">
  <span class="dots"></span><button>CH</button>
  <button aria-label="Keyboard"><svg class="i" viewBox="0 0 16 16"><path d="M.5 6.500h15v8H.5z" fill="#fff"/><path d="M2 8.500h12M2 10.500h12M4 12.500h8" stroke-dasharray="1 1"/><path d="M8 6V3h5V1"/></svg></button>
  <button class="help"><b>?</b></button>
  <button aria-label="Options"><svg class="i" viewBox="0 0 9 16"><path d="M2 2h5v2H2zM1 11h7l-3.500 3z" fill="#fff" stroke="none"/></svg></button>
</div>
</body>
</html>
```
FILE: styles.css
```css
* { box-sizing: border-box; }
:root { --face: #ece9d8; --shade: #aca899; --dark: #716f64; }
html { height: 100%; }
body { margin: 0; height: 100vh; display: flex; flex-direction: column; background: var(--face); color: #000; font: 11px/13px "Liberation Sans", Arial, sans-serif; position: relative; overflow: hidden; }
button, select, input { font: inherit; color: inherit; margin: 0; }
button { padding: 0; border: 0; background: none; display: flex; align-items: center; justify-content: center; flex: none; }
h1, h2, p, ul { margin: 0; padding: 0; }
.defs { position: absolute; width: 0; height: 0; }
.i { width: 16px; height: 16px; fill: none; stroke: #000; stroke-width: 1; shape-rendering: crispEdges; flex: none; display: block; }
.smooth { shape-rendering: auto; }

.titlebar { height: 26px; flex: none; display: flex; align-items: center; gap: 4px; padding: 0 3px 1px 2px; background: linear-gradient(#9bb8ee 0, #7d9ae4 20%, #7794de 55%, #84a8ec 80%, #6e8fd6 100%); }
.titlebar h1 { font: bold 13px/16px "Liberation Mono", monospace; color: #d9e4f8; flex: 1; }
.winbtns { display: flex; gap: 4px; }
.winbtns button { width: 19px; height: 20px; border: 1px solid #b5c8f4; border-radius: 3px; background: linear-gradient(135deg, #6f95ee, #2f5edb); }
.winbtns .close { background: #b06d85; }
.pointer { position: absolute; left: 463px; top: 0; width: 12px; height: 21px; z-index: 5; }

.grip { width: 9px; align-self: stretch; flex: none; margin: 2px 0; border-left: 1px solid #fff; background: linear-gradient(var(--shade), var(--shade)) 1px 0 / 1px 100% no-repeat, linear-gradient(#fff, #fff) 3px 0 / 1px 100% no-repeat, linear-gradient(var(--shade), var(--shade)) 5px 0 / 1px 100% no-repeat; }
.menubar { height: 29px; flex: none; display: flex; align-items: stretch; padding-left: 1px; border-top: 2px solid #fff; border-bottom: 1px solid var(--shade); }
.menubar button { padding: 0 8px 0 7px; }

.toolbar { height: 31px; flex: none; display: flex; gap: 2px; padding-left: 1px; align-items: stretch; overflow: hidden; }
.group { display: flex; align-items: center; padding-right: 6px; flex: none; border-top: 1px solid #fff; border-bottom: 1px solid var(--shade); border-right: 1px solid var(--shade); }
.group > button { width: 23px; height: 22px; }
.group .on { background: #f6f4ec; box-shadow: inset 1px 1px var(--shade), inset -1px -1px #fff; }
.last { flex: 1; border-right: 0; }
.chip { position: relative; }
.chip b { position: absolute; inset: 0; text-align: center; font-size: 12px; line-height: 22px; color: #fff; }
.second { height: 30px; padding-bottom: 1px; }
.second .group > button { width: 22px; }
.spare { width: 372px; }
.combo { display: flex; align-items: center; height: 20px; border: 2px solid; border-color: var(--dark) #fff #fff var(--dark); background: #fff; }
.combo select { appearance: none; border: 0; border-radius: 0; background: transparent; height: 16px; padding: 0; line-height: 16px; flex: 1; min-width: 0; text-align: right; outline: 0; }
.arrow { width: 14px; align-self: stretch; margin-left: 2px; background: var(--face); border: 1px solid; border-color: #fff var(--dark) var(--dark) #fff; display: flex; align-items: center; justify-content: center; flex: none; }
.arrow .i { width: 7px; height: 4px; }
.swatch { width: 21px; height: 14px; border: 1px solid #000; flex: none; }
.byclass { border: 1px solid #000; color: #0000a8; height: 15px; padding: 0 1px; width: 44px; flex: none; }
.c1 { width: 67px; margin: 0 3px; }
.c2 { width: 90px; margin: 0 3px 0 1px; }
.c3 { width: 89px; margin-right: 4px; }
.line select { text-align: left; padding-left: 4px; background: linear-gradient(#302, #302) 13px 7px / calc(100% - 16px) 1px no-repeat; }

.work { flex: 1; min-height: 0; display: flex; border-top: 1px solid var(--shade); }
.left { width: 190px; flex: none; border-left: 1px solid var(--shade); border-right: 1px solid #fff; padding: 4px 7px 3px 4px; display: flex; flex-direction: column; }
.dockhead { display: flex; align-items: center; gap: 2px; height: 14px; margin-bottom: 2px; flex: none; }
.rail { flex: 1; height: 8px; margin-right: 2px; border: solid #fff; border-width: 1px 0; background: linear-gradient(var(--shade) 0 1px, transparent 1px 3px, #fff 3px 4px, var(--shade) 4px 5px, transparent 5px); }
.dockhead button { width: 12px; height: 12px; border: 1px solid; border-color: #fff var(--dark) var(--dark) #fff; }
.dockhead .i, .navs .i { width: 9px; height: 9px; }
.sheet { flex: 1; min-height: 0; display: flex; flex-direction: column; border: 1px solid; border-color: #fff var(--dark) var(--dark) #fff; padding: 2px 1px 1px; margin-right: 1px; }
.tree { list-style: none; background: #fff; border: 1px solid; border-color: var(--dark) #fff #fff var(--dark); font: 10px/16px "Liberation Mono", "Courier New", monospace; padding: 2px 1px; overflow: hidden; min-height: 0; }
.datum { flex: 240 1 0; }
.view { flex: 261 1 0; }
.tree li { height: 16px; display: flex; align-items: center; white-space: pre; position: relative; }
.root { font-weight: bold; font-size: 11px; gap: 6px; }
.fold { width: 15px; height: 13px; }
.leaf { padding-left: 19px; gap: 5px; }
.leaf::before { content: ""; position: absolute; left: 8px; top: 0; width: 11px; height: 8px; border: dotted #aaa; border-width: 0 0 1px 1px; }
.leaf::after { content: ""; position: absolute; left: 8px; top: 8px; height: 8px; border-left: 1px dotted #aaa; }
.end::after { display: none; }
.code { width: 16px; text-align: center; font-size: 11px; }
.sel { background: red; color: #fff; }
.ico { width: 14px; height: 14px; }
.c13 { width: 13px; height: 13px; }
.minus { position: absolute; left: 4px; top: 4px; width: 9px; height: 9px; border: 1px solid var(--shade); background: linear-gradient(#000, #000) center / 5px 1px no-repeat #fff; z-index: 1; }
.deep { padding-left: 40px; gap: 6px; }
.deep::before { width: 0; height: 16px; border-width: 0 0 0 1px; }
.deep::after { left: 27px; top: 0; width: 11px; height: 16px; background: linear-gradient(90deg, #aaa 1px, transparent 1px) 0 7px / 2px 1px repeat-x; }
.lastdeep::after { height: 8px; }
.sys { gap: 6px; }
.end.leaf { gap: 6px; }
.link { display: flex; align-items: center; gap: 5px; height: 18px; margin: 1px 0 3px; padding-left: 9px; flex: none; border: solid; border-width: 1px 0 1px 1px; border-color: var(--dark) #fff #fff var(--dark); }
.link input { appearance: none; width: 12px; height: 12px; border: 1px solid; border-color: var(--dark) #fff #fff var(--dark); background: #fff; display: grid; place-items: center; }
.link input:checked::before { content: ""; width: 8px; height: 4px; border: solid #000; border-width: 0 0 2px 2px; transform: translateY(-1px) rotate(-45deg); }
.tabs { display: flex; align-items: flex-start; height: 20px; flex: none; padding-left: 2px; gap: 1px; font: 10px/14px "Liberation Mono", monospace; }
.tabs button { height: 17px; padding: 0 5px; border: 1px solid; border-color: transparent var(--dark) var(--dark) #fff; border-bottom-width: 2px; border-radius: 0 0 3px 3px; }
.tabs .cur { height: 19px; border-color: transparent transparent var(--shade) #fff; padding: 4px 9px 0 5px; }
.split { width: 9px; flex: none; background: linear-gradient(90deg, #fff 1px, transparent 1px 2px, var(--shade) 2px 3px) 4px 50% / 3px 115px no-repeat; border-right: 1px solid var(--shade); }

.viewport { flex: 1; min-width: 0; position: relative; border-left: 1px solid var(--dark); background: #505a6d; overflow: hidden; }
.scene { width: 100%; height: 100%; display: block; }
.axis { font: italic bold 15px "DejaVu Sans", sans-serif; fill: #ffff30; }
.dialog { position: absolute; left: 330px; top: 84px; width: 350px; border: 3px solid #0b39cf; border-top: 0; border-radius: 4px 4px 0 0; background: var(--face); }
.dhead { margin: 0 -2px; height: 20px; display: flex; align-items: center; justify-content: space-between; padding: 2px 4px 0 2px; border-radius: 3px 3px 0 0; background: linear-gradient(#3f8cf8, #0054e0 15%, #0060f4 70%, #0046cc); }
.dhead h2 { font: bold 12px/16px "Liberation Mono", monospace; color: #fff; }
.dhead button { width: 13px; height: 13px; border: 1px solid #fff; border-radius: 2px; background: #e35030; }
.dhead .i { width: 11px; height: 11px; }
.dbody { padding: 0 18px 3px 1px; }
.dbody p { line-height: 20px; }
.dbody .in1 { padding-left: 7px; }
.dbody .in2 { padding-left: 9px; }
.dbody .in3 { padding-left: 12px; }
.dbody hr { border: 0; border-top: 1px solid var(--shade); border-bottom: 1px solid #fff; margin: 8px 0 1px -1px; }

.palette { width: 70px; flex: none; display: flex; flex-direction: column; border: 1px solid; border-color: #fff var(--shade) var(--shade); border-width: 1px 2px; padding: 7px 3px 2px 1px; margin-top: 1px; background: linear-gradient(var(--shade), var(--shade)) 0 2px / 100% 1px no-repeat; }
.scroll { height: 12px; width: 100%; border: 1px solid; border-color: #fff #000 #000 #fff; z-index: 1; background: var(--face); }
.scroll .i { width: 9px; height: 6px; }
.cells { flex: 1; min-height: 0; overflow: hidden; display: grid; grid-template-columns: 24px 24px; grid-auto-rows: 24px; gap: 6px; padding: 4px 0 0 2px; }
.cells button { width: 24px; height: 24px; background: #c0c0c0; position: relative; }
.cells button::after { content: ""; position: absolute; right: -1px; bottom: -2px; border: 2px solid; border-color: transparent #000 #000 transparent; }
.cells .i { width: 24px; height: 24px; }
.cells span { position: absolute; left: 0; right: 0; text-align: center; }
.undo span { bottom: 0; font-size: 8px; line-height: 9px; font-weight: bold; }
.txt span { color: red; font-size: 9px; line-height: 9px; top: 2px; }
.t210 span { padding-left: 6px; }
.t10 span { font-size: 10px; }
.abc { font: bold 11px/12px "Liberation Sans", sans-serif; }
.cells .abc span { position: static; width: 8px; height: 22px; color: #0000c0; }
.cells .abc span:nth-child(2) { color: #00c000; padding-top: 4px; }
.cells .abc span:nth-child(3) { color: #e00000; padding-top: 9px; }

.side { flex: none; width: 36px; padding: 6px 4px 8px 4px; display: flex; flex-direction: column; gap: 40px; background: linear-gradient(#fff, #fff) 4px 0 / 1px 98% no-repeat; }
.navs { border: 1px solid; border-color: var(--shade) var(--dark) transparent #fff; padding-left: 3px; width: 26px; }
.navs button { width: 19px; height: 19px; border: 1px solid; border-color: #fff var(--dark) var(--dark) #fff; }
.vtabs { display: flex; flex-direction: column; gap: 1px; font: 11px/14px "Liberation Mono", monospace; }
.vtabs button { writing-mode: vertical-rl; width: 26px; height: 47px; justify-content: flex-start; padding-top: 5px; border: 1px solid; border-color: #fff var(--dark) var(--dark) transparent; border-width: 1px 2px 1px 0; border-radius: 0 3px 3px 0; }
.vtabs .cur { width: 28px; height: 50px; background: var(--face); }

.bottom { height: 31px; padding-top: 2px; border-bottom: 1px solid var(--shade); }
.command { width: 294px; padding-right: 7px; }
.command .stop { width: 18px; height: 18px; margin: 0 4px 0 7px; border: 1px solid; border-color: #fff #000 #000 #fff; }
.wide { flex: 1; }
.dim .i { stroke: #aaa696; filter: drop-shadow(1px 1px 0 #fff); }
.pages { width: 235px; }
.pages > button { width: 15px; }
.pages .i { width: 9px; height: 9px; }
.sheets { display: flex; flex: 1; height: 19px; border: 1px solid; border-color: var(--shade) #fff #fff var(--shade); margin-left: 2px; padding-left: 1px; align-items: flex-start; }
.sheets button { position: relative; width: 26px; }
.sheets .i { width: 28px; height: 16px; }
.sheets span { position: absolute; left: 0; right: 0; text-align: center; }

.status { height: 20px; flex: none; display: flex; gap: 3px; font: 13px/17px "DejaVu Sans", sans-serif; border-top: 1px solid #fff; padding-top: 1px; }
.status > * { border: 1px solid; border-color: var(--shade) #fff #fff var(--shade); white-space: nowrap; height: 18px; }
.mode { width: 108px; }
.prompt { flex: 1; display: flex; justify-content: flex-end; }
.prompt button { width: 14px; height: 15px; border: 1px solid; border-color: #fff var(--dark) var(--dark) #fff; }
.prompt .i { width: 9px; height: 9px; }
.count { width: 26px; display: flex; justify-content: space-between; font: 10px/15px "Liberation Mono", monospace; padding: 0 2px; }
.meter { width: 63px; background: linear-gradient(#000 0 7px, #fff 7px 8px, #000 8px 13px, transparent 13px) 1px 1px / 59px 14px no-repeat; }
.disc { width: 312px; }
.ime { position: absolute; right: 0; bottom: 0; width: 95px; height: 26px; display: flex; align-items: center; gap: 6px; padding: 0 5px 0 3px; background: linear-gradient(#4a8cf0, #245edb 20%, #2460de 85%, #1c4cb8); color: #fff; font: 11px/16px "Liberation Mono", monospace; }
.dots { width: 4px; height: 17px; background: radial-gradient(circle, #0a2d90 1px, transparent 2px) 0 0 / 4px 4px; }
.ime > button:first-of-type { background: #3a74e0; padding: 0 1px; }
.help { width: 13px; height: 14px; background: #fff; border: 1px solid #000; border-radius: 2px; font-size: 13px; }
.help b { color: #000; }
.ime button:last-child .i { width: 9px; }
```
